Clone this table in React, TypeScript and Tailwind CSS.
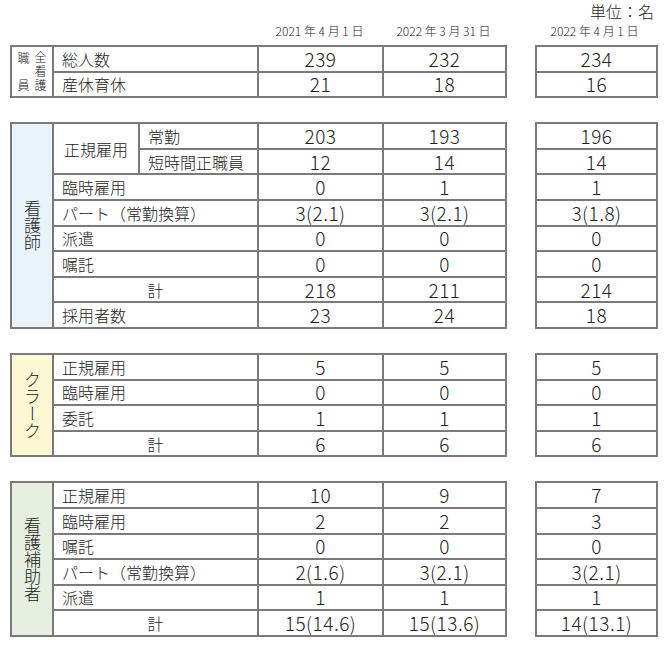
import React from 'react';

type Row = { label: string; sub?: string; center?: boolean; v: [string, string, string] };

const bd = 'border-2 border-[#7a7a7a] p-0';
const labelCell = `${bd} pl-[8px] text-left whitespace-nowrap text-[16px] leading-[20px]`;
const numCell = `${bd} text-center text-[19px] leading-[20px] tracking-[0.5px]`;

const nurses: Row[] = [
  { label: '正規雇用', sub: '常勤', v: ['203', '193', '196'] },
  { label: '正規雇用', sub: '短時間正職員', v: ['12', '14', '14'] },
  { label: '臨時雇用', v: ['0', '1', '1'] },
  { label: 'パート（常勤換算）', v: ['3(2.1)', '3(2.1)', '3(1.8)'] },
  { label: '派遣', v: ['0', '0', '0'] },
  { label: '嘱託', v: ['0', '0', '0'] },
  { label: '計', center: true, v: ['218', '211', '214'] },
  { label: '採用者数', v: ['23', '24', '18'] },
];

const clerks: Row[] = [
  { label: '正規雇用', v: ['5', '5', '5'] },
  { label: '臨時雇用', v: ['0', '0', '0'] },
  { label: '委託', v: ['1', '1', '1'] },
  { label: '計', center: true, v: ['6', '6', '6'] },
];

const aides: Row[] = [
  { label: '正規雇用', v: ['10', '9', '7'] },
  { label: '臨時雇用', v: ['2', '2', '3'] },
  { label: '嘱託', v: ['0', '0', '0'] },
  { label: 'パート（常勤換算）', v: ['2(1.6)', '3(2.1)', '3(2.1)'] },
  { label: '派遣', v: ['1', '1', '1'] },
  { label: '計', center: true, v: ['15(14.6)', '15(13.6)', '14(13.1)'] },
];

const staff: Row[] = [
  { label: '総人数', v: ['239', '232', '234'] },
  { label: '産休育休', v: ['21', '18', '16'] },
];

function Cols() {
  return (
    <colgroup>
      <col className="w-[42px]" />
      <col className="w-[86px]" />
      <col className="w-[119px]" />
      <col className="w-[125px]" />
      <col className="w-[123px]" />
    </colgroup>
  );
}

function RightTable({ rows }: { rows: Row[] }) {
  return (
    <table className="ml-[28px] w-[123px] table-fixed border-collapse self-start">
      <tbody>
        {rows.map((r, i) => (
          <tr key={i} className="h-[25.6px]">
            <td className={numCell}>{r.v[2]}</td>
          </tr>
        ))}
      </tbody>
    </table>
  );
}

function Section({ title, bg, rows }: { title: string; bg: string; rows: Row[] }) {
  return (
    <div className="flex">
      <table className="w-[495px] table-fixed border-collapse">
        <Cols />
        <tbody>
          {rows.map((r, i) => {
            const prevSame = i > 0 && r.sub && rows[i - 1].sub && rows[i - 1].label === r.label;
            const nextSame = r.sub && rows[i + 1]?.sub && rows[i + 1].label === r.label;
            return (
              <tr key={i} className="h-[25.6px]">
                {i === 0 && (
                  <td rowSpan={rows.length} className={`${bd} ${bg} align-middle`}>
                    <div className="flex justify-center">
                      <div className="text-[17px] leading-[18px] [writing-mode:vertical-rl]">{title}</div>
                    </div>
                  </td>
                )}
                {r.sub ? (
                  <>
                    {!prevSame && (
                      <td rowSpan={nextSame ? 2 : 1} className={labelCell + ' pl-[10px]'}>
                        {r.label}
                      </td>
                    )}
                    <td className={labelCell}>{r.sub}</td>
                  </>
                ) : (
                  <td
                    colSpan={2}
                    className={r.center ? `${bd} text-center text-[16px] leading-[20px]` : labelCell}
                  >
                    {r.label}
                  </td>
                )}
                <td className={numCell}>{r.v[0]}</td>
                <td className={numCell}>{r.v[1]}</td>
              </tr>
            );
          })}
        </tbody>
      </table>
      <RightTable rows={rows} />
    </div>
  );
}

export default function App() {
  return (
    <div className="h-[645px] w-[665px] bg-white pl-[10px] pt-[2px] font-['Noto_Sans_CJK_JP',sans-serif] font-light text-[#222]">
      {/* Unit */}
      <div className="flex h-[19px] justify-end pr-[11px] text-[16px] leading-[18px]">単位：名</div>

      {/* Date headers */}
      <div className="flex h-[24px] items-center pb-[4px] text-[12px] leading-none">
        <div className="w-[247px]" />
        <div className="w-[125px] text-center">2021 年 4 月 1 日</div>
        <div className="w-[123px] text-center">2022 年 3 月 31 日</div>
        <div className="ml-[28px] w-[123px] text-center">2022 年 4 月 1 日</div>
      </div>

      <div className="flex flex-col gap-[24px]">
        {/* All nursing staff */}
        <div className="flex">
          <table className="w-[495px] table-fixed border-collapse">
            <Cols />
            <tbody>
              {staff.map((r, i) => (
                <tr key={i} className="h-[25.6px]">
                  {i === 0 && (
                    <td rowSpan={2} className={bd}>
                      <div className="flex h-[47px] justify-center gap-[5px] text-[12px] leading-[14px]">
                        <div className="flex flex-col justify-between py-[3px]">
                          <span>職</span>
                          <span>員</span>
                        </div>
                        <div className="flex flex-col pt-[2px]">
                          <span>全</span>
                          <span>看</span>
                          <span>護</span>
                        </div>
                      </div>
                    </td>
                  )}
                  <td colSpan={2} className={labelCell}>
                    {r.label}
                  </td>
                  <td className={numCell}>{r.v[0]}</td>
                  <td className={numCell}>{r.v[1]}</td>
                </tr>
              ))}
            </tbody>
          </table>
          <RightTable rows={staff} />
        </div>

        <Section title="看護師" bg="bg-[#e8f4fa]" rows={nurses} />
        <Section title="クラーク" bg="bg-[#fdf8d4]" rows={clerks} />
        <Section title="看護補助者" bg="bg-[#e7efe0]" rows={aides} />
      </div>
    </div>
  );
}
